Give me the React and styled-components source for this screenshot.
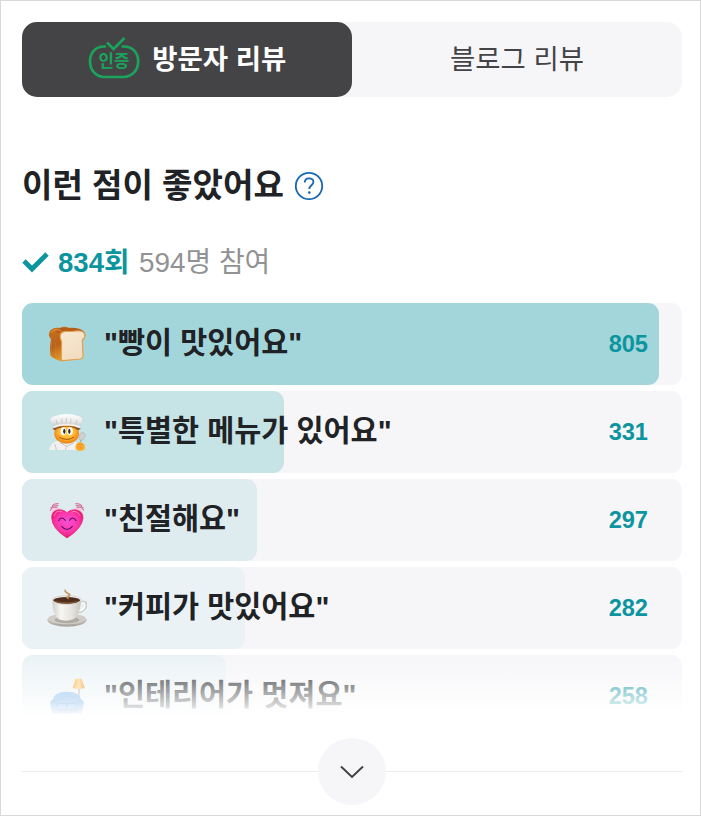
import React from "react";
import styled, { createGlobalStyle } from "styled-components";

const GlobalStyle = createGlobalStyle`
  * { box-sizing: border-box; }
  body { margin: 0; background: #fff; }
  button { font: inherit; border: 0; padding: 0; background: none; }
`;

const Page = styled.main`
  width: 701px;
  height: 816px;
  overflow: hidden;
  border: 1px solid #d8d8d9;
  padding: 21px 18px 0 21px;
  background: #fff;
  color: #202225;
  font-family: "Liberation Sans", "Noto Sans CJK KR", sans-serif;
`;

const Tabs = styled.nav`
  display: flex;
  height: 75px;
  border-radius: 15px;
  background: #f6f6f9;
`;

const Tab = styled.button`
  flex: 1;
  display: flex;
  align-items: center;
  justify-content: center;
  gap: 12.5px;
  border-radius: 15px;
  font-size: 27.5px;
  line-height: 40px;
  color: ${(p) => (p.$active ? "#fff" : "#444446")};
  background: ${(p) => (p.$active ? "#444446" : "transparent")};
  font-weight: ${(p) => (p.$active ? 700 : 400)};
`;

const BadgeIcon = styled.svg`
  width: 52px;
  height: 44px;
  margin-bottom: 4px;
  font-family: "Noto Sans CJK KR", sans-serif;
`;

const Heading = styled.h2`
  display: flex;
  align-items: center;
  gap: 10.5px;
  height: 48px;
  margin: 65px 0 0;
  font-size: 33.1px;
  line-height: 48px;
  font-weight: 700;
`;

const HelpIcon = styled.svg`
  width: 30px;
  height: 30px;
`;

const Summary = styled.div`
  display: flex;
  align-items: center;
  height: 40px;
  margin-top: 32px;
  font-size: 27.9px;
  line-height: 40px;
  color: #929294;
`;

const CheckIcon = styled.svg`
  width: 27px;
  height: 22px;
  margin-right: 9px;
`;

const Total = styled.strong`
  margin-right: 9.5px;
  padding-top: 1px;
  font-size: 27.6px;
  color: #0c959f;
`;

const Participants = styled.span`
  padding-top: 1px;
`;

const ListWindow = styled.div`
  position: relative;
  height: 418px;
  margin-top: 21px;
  overflow: hidden;
`;

const List = styled.ul`
  display: grid;
  grid-auto-rows: 82.4px;
  gap: 5.6px;
  margin: 0;
  padding: 0;
  list-style: none;
`;

const Fade = styled.div`
  position: absolute;
  inset: auto 0 0 0;
  height: 67px;
  background: linear-gradient(rgba(255, 255, 255, 0), #fff 94%);
`;

const Row = styled.li`
  display: flex;
  align-items: center;
  padding: 0 34px 0 25px;
  border-radius: 11px;
  background: #f6f6f9;
  position: relative;
  isolation: isolate;
`;

const Bar = styled.span`
  position: absolute;
  z-index: -1;
  inset: 0 auto 0 0;
  width: ${(p) => p.$width}px;
  border-radius: 11px;
  background: ${(p) => p.$tint};
`;

const Emoji = styled.svg`
  flex: none;
  width: 40px;
  height: 40px;
`;

const Label = styled.span`
  flex: 1;
  margin-left: 17px;
  padding-bottom: 2px;
  font-size: 29.4px;
  line-height: 44px;
  font-weight: 700;
`;

const Count = styled.span`
  font-size: 23.6px;
  line-height: 30px;
  font-weight: 700;
  color: #0c959f;
`;

const More = styled.div`
  display: flex;
  align-items: center;
  height: 68px;
  margin-top: 16px;
`;

const Rule = styled.span`
  flex: 1;
  height: 1px;
  background: #ececee;
`;

const MoreButton = styled.button`
  display: grid;
  place-items: center;
  width: 68px;
  height: 67px;
  margin-top: 1px;
  padding-top: 1px;
  border-radius: 50%;
  background: #f6f6f9;
`;

function Bread() {
  return (
    <Emoji viewBox="0 0 120 120">
      <defs>
        <linearGradient id="crust" x1="0" y1="0" x2="0.5" y2="1">
          <stop offset="0" stopColor="#c9741f" />
          <stop offset=".5" stopColor="#b8621a" />
          <stop offset="1" stopColor="#f5a62d" />
        </linearGradient>
        <linearGradient id="slice" x1="0" y1="0" x2=".5" y2="1">
          <stop offset="0" stopColor="#f8e9d2" />
          <stop offset="1" stopColor="#f2dcc1" />
        </linearGradient>
      </defs>
      <path d="M7 25C11 13 25 9 38 12C48 6 62 8 68 13C85 10 103 12 112 24C119 34 113 44 107 47L109 96C109 103 103 106 97 106L45 112C34 110 18 103 11 96C7 78 10 62 12 45C6 40 4 32 7 25Z" fill="url(#crust)" />
      <path d="M29 17C42 9 57 14 66 12C80 8 96 16 97 21C79 23 66 19 52 23C41 23 34 29 25 24Z" fill="#b55c19" />
      <path d="M12 26C21 14 36 16 44 22" fill="none" stroke="#e89a42" strokeWidth="3" />
      <path d="M41 46C36 32 42 23 56 22C72 24 83 20 96 21C108 20 116 29 113 39C111 44 107 46 106 48L108 94Q109 103 99 105L48 110Q43 110 43 104L44 55Q44 49 41 46Z" fill="url(#slice)" stroke="#e0a052" strokeWidth="3.5" />
      <path d="M14 51Q10 74 15 94M25 55L28 99" fill="none" stroke="#dc8a2d" strokeWidth="2" opacity=".5" />
    </Emoji>
  );
}

function Chef() {
  return (
    <Emoji viewBox="0 0 120 120">
      <defs>
        <radialGradient id="face" cx=".5" cy=".45">
          <stop offset="0" stopColor="#ffd34b" />
          <stop offset=".7" stopColor="#ffb22a" />
          <stop offset="1" stopColor="#ec8818" />
        </radialGradient>
        <linearGradient id="hat" x1="0" y1="0" x2="0" y2="1">
          <stop offset="0" stopColor="#fff" />
          <stop offset=".6" stopColor="#e9e9ea" />
          <stop offset="1" stopColor="#c9c9ca" />
        </linearGradient>
      </defs>
      <path d="M7 114Q10 91 30 88L77 88Q100 91 102 114Z" fill="#f2f1f2" />
      <path d="M23 97Q28 107 28 114M38 92L61 103L82 91M60 103Q55 108 56 114" fill="none" stroke="#b9babb" strokeWidth="2.5" />
      <ellipse cx="59" cy="65" rx="37" ry="30" fill="url(#face)" />
      <path d="M16 50Q59 32 102 50L94 55Q82 47 75 46Q57 40 43 47Q31 46 23 55Z" fill="#8a4c26" />
      <path d="M20 43L11 27Q9 13 26 12Q38 6 58 6Q80 6 92 12Q107 14 106 27L99 43Q58 31 20 43Z" fill="url(#hat)" />
      <path d="M27 24L31 36M44 20L46 34M58 18V33M72 20L71 34M90 24L86 36" fill="none" stroke="#b8b8ba" strokeWidth="2" />
      <path d="M20 42Q58 30 99 42L98 46Q58 35 21 46Z" fill="#f6f6f6" />
      <ellipse cx="49" cy="58" rx="8.5" ry="12" fill="#fff" />
      <ellipse cx="69" cy="58" rx="8.5" ry="12" fill="#fff" />
      <ellipse cx="52" cy="58" rx="3.5" ry="8" fill="#3b2821" />
      <ellipse cx="67" cy="58" rx="3.5" ry="8" fill="#3b2821" />
      <path d="M38 76Q59 89 80 76" fill="none" stroke="#984a19" strokeWidth="2.8" strokeLinecap="round" />
      <ellipse cx="32" cy="72" rx="6" ry="4" fill="#ff9030" />
      <ellipse cx="87" cy="72" rx="6" ry="4" fill="#ff9030" />
      <path d="M99 96L104 77" stroke="#adadae" strokeWidth="4" />
      <ellipse cx="105" cy="73" rx="9" ry="12" transform="rotate(24 105 73)" fill="#cdd0d1" stroke="#a1a7a9" />
      <path d="M86 112Q84 98 91 94Q98 88 107 93Q116 99 113 111Q106 119 95 116Z" fill="#ffab2c" />
      <path d="M91 98Q100 94 109 100M91 105Q98 100 105 108" fill="none" stroke="#df851d" strokeWidth="2" />
    </Emoji>
  );
}

function Heart() {
  return (
    <Emoji viewBox="0 0 120 120">
      <defs>
        <radialGradient id="heart" cx=".5" cy=".43" r=".58">
          <stop offset="0" stopColor="#f64ed4" />
          <stop offset=".6" stopColor="#fb39aa" />
          <stop offset="1" stopColor="#e51271" />
        </radialGradient>
      </defs>
      <path d="M10 32Q13 20 31 22M10 24Q17 15 34 17M15 17Q22 10 35 11M110 32Q107 20 89 22M110 24Q103 15 86 17M105 17Q98 10 85 11" fill="none" stroke="#d55a8b" strokeWidth="3" />
      <path d="M15 39Q18 23 40 27M105 39Q102 23 80 27" fill="none" stroke="#ffc2da" strokeWidth="5" />
      <path d="M60 114Q15 86 14 54C12 26 46 23 60 38C74 23 110 27 108 55Q105 86 60 114Z" fill="url(#heart)" stroke="#d92364" strokeWidth="2" />
      <path d="M21 47Q27 29 44 34M74 36Q89 29 99 46" fill="none" stroke="#ff79b8" strokeWidth="3" strokeLinecap="round" />
      <path d="M35 62Q43 47 55 61M68 61Q77 47 87 62M44 79Q60 98 76 79" fill="none" stroke="#571065" strokeWidth="3.2" strokeLinecap="round" />
    </Emoji>
  );
}

function Coffee() {
  return (
    <Emoji viewBox="0 0 120 120">
      <defs>
        <linearGradient id="cup">
          <stop offset="0" stopColor="#d0cec7" />
          <stop offset=".3" stopColor="#f7f6f3" />
          <stop offset=".68" stopColor="#e6e4df" />
          <stop offset="1" stopColor="#c8c5bd" />
        </linearGradient>
        <linearGradient id="saucer" x1="0" y1="0" x2="0" y2="1">
          <stop offset="0" stopColor="#e4e1dd" />
          <stop offset="1" stopColor="#a5a19a" />
        </linearGradient>
      </defs>
      <ellipse cx="60" cy="96" rx="59" ry="20" fill="url(#saucer)" />
      <ellipse cx="60" cy="93" rx="56" ry="16" fill="#d0cdc8" />
      <ellipse cx="60" cy="96" rx="37" ry="10" fill="#b0aca4" />
      <path d="M97 45Q121 35 117 54Q113 70 93 74" fill="none" stroke="#d0cdc7" strokeWidth="7" />
      <path d="M99 46Q116 39 114 54Q111 66 95 70" fill="none" stroke="#fafafa" strokeWidth="4" />
      <path d="M16 37Q15 78 35 94Q58 103 81 93Q101 77 102 37Z" fill="url(#cup)" />
      <ellipse cx="59" cy="36" rx="44" ry="13" fill="#f2f0ee" stroke="#cac7c1" strokeWidth="2" />
      <ellipse cx="59" cy="37" rx="40" ry="10" fill="#4e2f1d" />
      <path d="M25 40Q57 50 92 40Q66 49 25 40Z" fill="#9e6233" stroke="#86532c" strokeWidth="2" />
      <path d="M65 34Q54 29 61 24Q69 20 55 14Q50 9 54 4Q58 14 65 15Q75 20 66 26Q61 29 65 34Z" fill="#c8995f" stroke="#c8995f" />
    </Emoji>
  );
}

function Sofa() {
  return (
    <Emoji viewBox="0 0 120 120">
      <defs>
        <linearGradient id="sofa" x1="0" y1="0" x2="0" y2="1">
          <stop offset="0" stopColor="#76b4ec" />
          <stop offset="1" stopColor="#3887da" />
        </linearGradient>
        <linearGradient id="shade">
          <stop offset="0" stopColor="#ee9828" />
          <stop offset=".5" stopColor="#ffd475" />
          <stop offset="1" stopColor="#e58419" />
        </linearGradient>
      </defs>
      <path d="M96 34V95" stroke="#9a9690" strokeWidth="4" />
      <path d="M86 8L103 8L114 36Q96 42 77 36Z" fill="url(#shade)" />
      <path d="M19 75C15 62 28 47 60 47C92 47 105 62 101 75V103H19Z" fill="url(#sofa)" />
      <path d="M31 84H89V101H31Z" fill="#549fe8" />
      <path d="M31 101H89V112H31Z" fill="#2973c2" />
      <path d="M60 85V101M31 84Q45 79 59 84Q74 79 89 84M31 101H89" fill="none" stroke="#1760ae" strokeWidth="2.5" />
      <path d="M17 111Q15 98 12 87C8 76 16 70 24 73Q31 76 31 86V111Q24 116 17 111ZM103 111Q105 98 108 87C112 76 104 70 96 73Q89 76 89 86V111Q96 116 103 111Z" fill="#3f91e0" stroke="#2b7acb" strokeWidth="2" />
    </Emoji>
  );
}

const reviews = [
  { icon: Bread, label: "빵이 맛있어요", count: 805, width: 637, tint: "#a3d6db" },
  { icon: Chef, label: "특별한 메뉴가 있어요", count: 331, width: 262, tint: "#c6e3e6" },
  { icon: Heart, label: "친절해요", count: 297, width: 235, tint: "#dfecef" },
  { icon: Coffee, label: "커피가 맛있어요", count: 282, width: 223, tint: "#eaf2f5" },
  { icon: Sofa, label: "인테리어가 멋져요", count: 258, width: 204, tint: "#eaf2f5" },
];

export default function App() {
  return (
    <Page>
      <GlobalStyle />
      <Tabs>
        <Tab $active>
          <BadgeIcon viewBox="0 0 52 44" fill="none" stroke="#1aa35b" strokeWidth="2.7">
            <path d="M18 10.5H16C7 10.5 2 17 2 25.5S8 41 16 41H36C44 41 50.2 34 50.2 25.5S45 10.5 36 10.5H33.5" />
            <path d="M19 6.5L25.5 13L36.5 2" />
            <text x="26" y="30.5" textAnchor="middle" fontSize="16.8" fontWeight="700" fill="#1aa35b" stroke="none">인증</text>
          </BadgeIcon>
          방문자 리뷰
        </Tab>
        <Tab>블로그 리뷰</Tab>
      </Tabs>
      <Heading>
        이런 점이 좋았어요
        <HelpIcon viewBox="0 0 30 30">
          <circle cx="15" cy="15" r="13.2" fill="none" stroke="#1768b3" strokeWidth="1.8" />
          <path d="M10.8 11.5C10.8 8.8 12.5 7.3 15.1 7.3C17.7 7.3 19.4 8.8 19.4 11C19.4 14.2 15.3 14.4 15.3 18" fill="none" stroke="#1768b3" strokeWidth="1.8" />
          <circle cx="15.3" cy="21.6" r="1.3" fill="#1768b3" />
        </HelpIcon>
      </Heading>
      <Summary>
        <CheckIcon viewBox="0 0 27 22">
          <path d="M2 10L10 18L25 3" fill="none" stroke="#0c959f" strokeWidth="4.8" />
        </CheckIcon>
        <Total>834회</Total>
        <Participants>594명 참여</Participants>
      </Summary>
      <ListWindow>
        <List>
          {reviews.map(({ icon: Icon, label, count, width, tint }) => (
            <Row key={label}>
              <Bar $width={width} $tint={tint} />
              <Icon />
              <Label>"{label}"</Label>
              <Count>{count}</Count>
            </Row>
          ))}
        </List>
        <Fade />
      </ListWindow>
      <More>
        <Rule />
        <MoreButton aria-label="더보기">
          <svg width="26" height="16" viewBox="0 0 26 16">
            <path d="M2 2.5L13 13L24 2.5" fill="none" stroke="#3f3f41" strokeWidth="1.9" />
          </svg>
        </MoreButton>
        <Rule />
      </More>
    </Page>
  );
}
